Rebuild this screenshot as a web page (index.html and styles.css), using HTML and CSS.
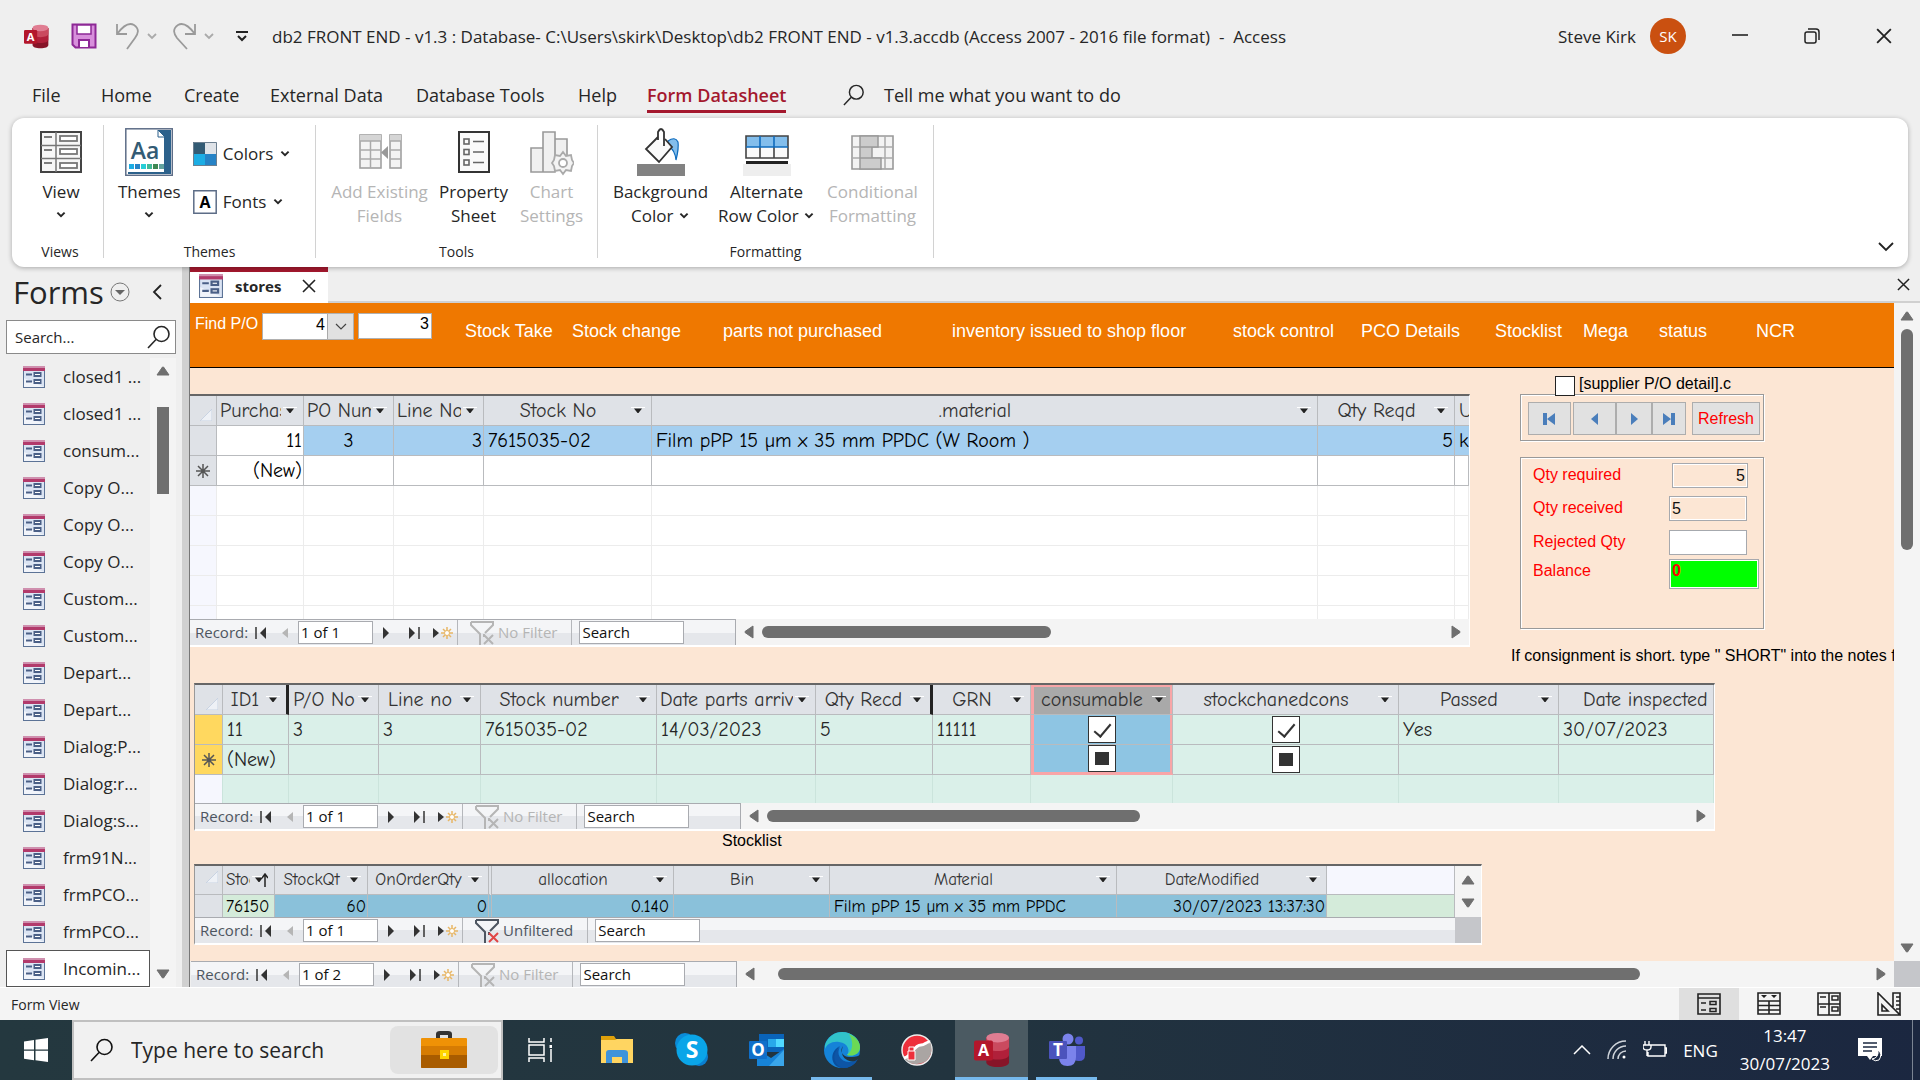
FILE: index.html
```html
<!DOCTYPE html>
<html lang="en">
<head>
  <meta charset="UTF-8">
  <title>db2 FRONT END - v1.3 - Access</title>
  <link rel="stylesheet" href="styles.css">
</head>
<body>
  <!-- shared icons -->
  <svg class="sprite" width="0" height="0">
    <symbol id="i-form" viewBox="0 0 22 22">
      <rect x="0.5" y="0.5" width="21" height="21" fill="#dbe4f3" stroke="#5c7396"/>
      <path d="M1 12L21 21H1z" fill="#fff" opacity=".6"/>
      <rect width="22" height="5" fill="#b23a6b"/>
      <rect width="22" height="2" fill="#cf8fae"/>
      <path d="M3 8.500h6M3 15.500h6" stroke="#4a5f86" stroke-width="2"/>
      <rect x="11.500" y="7" width="6" height="3" fill="#fff" stroke="#4a5f86" stroke-width="2"/>
      <rect x="11.500" y="14" width="6" height="3" fill="#fff" stroke="#4a5f86" stroke-width="2"/>
    </symbol>
    <symbol id="i-chev" viewBox="0 0 10 10"><path d="M2 3l3 3 3-3" fill="none" stroke="currentColor" stroke-width="1.600"/></symbol>
    <symbol id="i-x" viewBox="0 0 14 14"><path d="M1 1l12 12M13 1L1 13" fill="none" stroke="#222" stroke-width="1.600"/></symbol>
    <symbol id="i-search" viewBox="0 0 24 24"><circle cx="14.500" cy="9" r="7.500" fill="none" stroke="currentColor" stroke-width="1.600"/><path d="M9 14.500L1 23" stroke="currentColor" stroke-width="1.600"/></symbol>
    <symbol id="i-drop" viewBox="0 0 14 8"><path d="M0 .5h14" stroke="#fff"/><path d="M3 1.500h8L7.500 6h-1z" fill="#222"/></symbol>
    <symbol id="i-left" viewBox="0 0 10 14"><path d="M9 1v12L1 7.500v-1z" fill="#6f6f6f" stroke="#6f6f6f" stroke-linejoin="round"/></symbol>
    <symbol id="i-right" viewBox="0 0 10 14"><path d="M1 1v12L9 7.500v-1z" fill="#6f6f6f" stroke="#6f6f6f" stroke-linejoin="round"/></symbol>
    <symbol id="i-up" viewBox="0 0 14 10"><path d="M1 9h12L7.500 1h-1z" fill="#6f6f6f" stroke="#6f6f6f" stroke-linejoin="round"/></symbol>
    <symbol id="i-down" viewBox="0 0 14 10"><path d="M1 1h12L7.500 9h-1z" fill="#6f6f6f" stroke="#6f6f6f" stroke-linejoin="round"/></symbol>
    <symbol id="i-first" viewBox="0 0 12 12"><path d="M1 0v12" stroke="currentColor" stroke-width="1.500"/><path d="M11 0v12L5 6z" fill="currentColor"/></symbol>
    <symbol id="i-last" viewBox="0 0 12 12"><path d="M11 0v12" stroke="currentColor" stroke-width="1.500"/><path d="M1 0v12l6-6z" fill="currentColor"/></symbol>
    <symbol id="i-prev" viewBox="0 0 12 12"><path d="M9 1v10L3 6z" fill="currentColor"/></symbol>
    <symbol id="i-next" viewBox="0 0 12 12"><path d="M3 0v12l6-6z" fill="currentColor"/></symbol>
    <symbol id="i-new" viewBox="0 0 20 12"><path d="M0 1v10l6-5z" fill="#333"/><path d="M14 0v12M8 6h12M10 2l8 8M18 2l-8 8" stroke="#e8b766" stroke-width="1.500"/><circle cx="14" cy="6" r="2.500" fill="#fff" stroke="#e8b766"/></symbol>
    <symbol id="i-filter" viewBox="0 0 24 24"><path d="M1 1h22v3l-8 8M1 1v3l9 9v11M14 13v3" fill="none" stroke="currentColor" stroke-width="2"/><path d="M14 14l9 9M23 14l-9 9" stroke-width="2"/></symbol>
    <symbol id="i-star" viewBox="0 0 14 14"><path d="M7 0v14M0 7h14M2 2l10 10M12 2L2 12" stroke="#555" stroke-width="1.500"/></symbol>
    <symbol id="i-corner" viewBox="0 0 12 12"><path d="M12 0v12H0z" fill="#eef1f6" stroke="#c9d3e2"/></symbol>
    <symbol id="i-access" viewBox="0 0 38 38">
      <path d="M13 6v26c0 3 5 5 12 5s12-2 12-5V6z" fill="#871428"/>
      <path d="M13 6v18c0 3 5 5 12 5s12-2 12-5V6z" fill="#b0203a"/>
      <path d="M13 6v9c0 3 5 5 12 5s12-2 12-5V6z" fill="#ca4a5f"/>
      <ellipse cx="25" cy="6" rx="12" ry="5" fill="#e07d92"/>
      <rect x="0" y="9" width="20" height="21" rx="2" fill="#b3162b"/>
      <text x="10" y="25.500" text-anchor="middle" class="logo-letter">A</text>
    </symbol>
  </svg>

  <header class="titlebar">
    <svg class="app-logo" width="25" height="25"><use href="#i-access"/></svg>
    <button class="icon-btn" aria-label="Save"><svg width="26" height="26" viewBox="0 0 26 26"><path d="M1.500 1.500h23v23h-20l-3-3z" fill="#d78fdb" stroke="#8d2896" stroke-width="2"/><rect x="6" y="2" width="14" height="9" fill="#fff" stroke="#8d2896" stroke-width="1.500"/><rect x="7" y="16" width="12" height="9" fill="#8d2896"/><rect x="9" y="18" width="8" height="6" fill="#fff"/></svg></button>
    <button class="icon-btn undo" aria-label="Undo"><svg width="42" height="28" viewBox="0 0 42 28"><path d="M2 2v10h10M2 12C8 4 14 0 19 3c6 4 4 9 1 13l-8 11" fill="none" stroke="#9a9a9a" stroke-width="1.800"/><path d="M33 12l4 4 4-4" fill="none" stroke="#aaa" stroke-width="1.800"/></svg></button>
    <button class="icon-btn redo" aria-label="Redo"><svg width="42" height="28" viewBox="0 0 42 28"><path d="M23 2v10H13M23 12C17 4 11 0 6 3c-6 4-4 9-1 13l10 11" fill="none" stroke="#9a9a9a" stroke-width="1.800"/><path d="M33 12l4 4 4-4" fill="none" stroke="#aaa" stroke-width="1.800"/></svg></button>
    <button class="icon-btn" aria-label="Customize"><svg width="12" height="12" viewBox="0 0 12 12"><path d="M0 2h12M2 6l4 4 4-4" fill="none" stroke="#222" stroke-width="2"/></svg></button>
    <div class="title">db2 FRONT END - v1.3 : Database- C:\Users\skirk\Desktop\db2 FRONT END - v1.3.accdb (Access 2007 - 2016 file format)&nbsp; -&nbsp; Access</div>
    <span class="user">Steve Kirk</span>
    <span class="avatar">SK</span>
    <button class="win-btn" aria-label="Minimize"><svg width="16" height="16" viewBox="0 0 16 16"><path d="M0 7h16" stroke="#222" stroke-width="1.600"/></svg></button>
    <button class="win-btn" aria-label="Restore"><svg width="16" height="16" viewBox="0 0 16 16"><rect x="1" y="4" width="11" height="11" rx="2" fill="none" stroke="#222" stroke-width="1.500"/><path d="M4 1h8q3 0 3 3v8" fill="none" stroke="#222" stroke-width="1.500"/></svg></button>
    <button class="win-btn" aria-label="Close"><svg width="16" height="16"><use href="#i-x"/></svg></button>
  </header>

  <nav class="menu">
    <a href="#" class="m-file">File</a>
    <a href="#" class="m-home">Home</a>
    <a href="#" class="m-create">Create</a>
    <a href="#" class="m-ext">External Data</a>
    <a href="#" class="m-db">Database Tools</a>
    <a href="#" class="m-help">Help</a>
    <a href="#" class="m-form active"><span>Form Datasheet</span></a>
    <svg class="m-search" width="22" height="22"><use href="#i-search"/></svg>
    <a href="#">Tell me what you want to do</a>
  </nav>

  <section class="ribbon">
    <div class="group g-views">
      <div class="tools">
        <button class="tool single">
          <svg width="42" height="42" viewBox="0 0 42 42"><rect x="1" y="1" width="40" height="40" fill="#f7f7f7" stroke="#444" stroke-width="2"/><path d="M1 14.500h40M1 27.500h40M16 1v40" stroke="#777" stroke-width="1.500"/><path d="M4 6h8M4 19h8M4 32h8" stroke="#555" stroke-width="1.600"/><g fill="#fff" stroke="#777" stroke-width="1.800"><rect x="20" y="5" width="17" height="5"/><rect x="20" y="18" width="17" height="5"/><rect x="20" y="32" width="17" height="5"/></g></svg>
          <span>View</span><svg width="12" height="12"><use href="#i-chev"/></svg>
        </button>
      </div>
      <div class="caption">Views</div>
    </div>
    <div class="group g-themes">
      <div class="tools">
        <button class="tool single">
          <svg width="48" height="48" viewBox="0 0 48 48"><rect x=".8" y=".8" width="46.500" height="46.500" fill="#fff" stroke="#5d6d87" stroke-width="1.500"/><path d="M33 2h13v44H3v-2h36V9h-6z" fill="#2c618b"/><path d="M33 2l7 7h-7z" fill="#fff" stroke="#2c618b"/><text x="20" y="31" text-anchor="middle" class="aa">Aa</text><rect x="4" y="36" width="5" height="5" fill="#1cade4"/><rect x="10" y="36" width="5" height="5" fill="#2683c6"/><rect x="16" y="36" width="5" height="5" fill="#27ced7"/><rect x="22" y="36" width="5" height="5" fill="#42ba97"/><rect x="28" y="36" width="5" height="5" fill="#3e8853"/><rect x="34" y="36" width="5" height="5" fill="#62a39f"/></svg>
          <span>Themes</span><svg width="12" height="12"><use href="#i-chev"/></svg>
        </button>
        <div class="mini-tools">
          <button><svg width="24" height="24" viewBox="0 0 24 24"><path fill="#335b74" d="M0 0h12v12H0z"/><path fill="#dfe3e8" d="M12 0h12v12H12z"/><path fill="#1cade4" d="M0 12h12v12H0z"/><path fill="#2683c6" d="M12 12h12v12H12z"/><path d="M.5.500h23v23H.5z" fill="none" stroke="#6c7f90"/></svg>Colors<svg width="12" height="12"><use href="#i-chev"/></svg></button>
          <button><svg width="24" height="24" viewBox="0 0 24 24"><path d="M.8.800h22.400v22.400H.8z" fill="#fff" stroke="#5d6d87" stroke-width="1.500"/><text x="12" y="18" text-anchor="middle" class="font-a">A</text></svg>Fonts<svg width="12" height="12"><use href="#i-chev"/></svg></button>
        </div>
      </div>
      <div class="caption">Themes</div>
    </div>
    <div class="group g-tools">
      <div class="tools">
        <button class="tool w-add" disabled>
          <svg width="44" height="44" viewBox="0 0 44 44"><g fill="#f3f3f3" stroke="#a0a0a0" stroke-width="1.600"><rect x="2" y="5" width="21" height="33"/><rect x="32" y="5" width="11" height="33"/></g><path d="M2 5h21v6H2zM32 5h11v6H32z" fill="#d5d5d5"/><path d="M2 11h21M2 20h21M2 29h21M12.500 11v27M32 11h11M32 20h11M32 29h11" stroke="#aaa" stroke-width="1.500"/><path d="M30 16v13l-7-6.500z" fill="#999"/></svg>
          <span>Add Existing<br>Fields</span>
        </button>
        <button class="tool w-prop">
          <svg width="32" height="44" viewBox="0 0 32 44"><rect x="1" y="2" width="30" height="40" fill="#fafafa" stroke="#333" stroke-width="2"/><g fill="none" stroke="#666" stroke-width="1.600"><rect x="6" y="9" width="5" height="5"/><rect x="6" y="19.500" width="5" height="5"/><rect x="6" y="30" width="5" height="5"/><path d="M15 11.500h11M15 22h11M15 32.500h11"/></g></svg>
          <span>Property<br>Sheet</span>
        </button>
        <button class="tool w-chart" disabled>
          <svg width="44" height="44" viewBox="0 0 44 44"><g fill="#f0f0f0" stroke="#999" stroke-width="1.600"><path d="M1 18h12v24H1zM13 2h12v40H13zM25 9h12v20H25z"/></g><path d="M33 22l3 4 5-1 1 5 2 3-2 3-1 5-5-1-3 4-3-4-5 1-1-5-2-3 2-3 1-5 5 1z" fill="#f3f3f3" stroke="#aaa" stroke-width="1.800"/><circle cx="33" cy="33" r="4" fill="#fff" stroke="#aaa" stroke-width="1.800"/></svg>
          <span>Chart<br>Settings</span>
        </button>
      </div>
      <div class="caption">Tools</div>
    </div>
    <div class="group g-format">
      <div class="tools">
        <button class="tool w-bg">
          <svg width="48" height="48" viewBox="0 0 48 48"><path d="M0 36h48v12H0z" fill="#828282"/><path d="M31 13q7-5 10 1 1 6-2 18-1-10-7-13z" fill="#83beec" stroke="#0f6cbd" stroke-width="1.200"/><path d="M21 9L9 21l13 13 13-15-7-8" fill="#fafafa" stroke="#333" stroke-width="1.800"/><path d="M21 12V4q3-6 6 0v14" fill="#fff" stroke="#333" stroke-width="1.800"/></svg>
          <span>Background<br>Color <svg width="12" height="12"><use href="#i-chev"/></svg></span>
        </button>
        <button class="tool w-alt">
          <svg width="48" height="48" viewBox="0 0 48 48"><path d="M0 36h48v12H0z" fill="#eee"/><path d="M3 8h42v11H3z" fill="#83beec"/><path d="M3 19h42v11H3z" fill="#fafafa"/><path d="M17 19v11M31 19v11M3 8h42v22H3z" fill="none" stroke="#444" stroke-width="1.600"/><path d="M3 19h42M17 8v11M31 8v11" stroke="#0f6cbd" stroke-width="1.600"/><path d="M3 34.500h42" stroke="#222" stroke-width="3"/></svg>
          <span>Alternate<br>Row Color <svg width="12" height="12"><use href="#i-chev"/></svg></span>
        </button>
        <button class="tool w-cond" disabled>
          <svg width="44" height="48" viewBox="0 0 44 48"><path d="M1 8h41v33H1z" fill="#f3f3f3" stroke="#999" stroke-width="1.600"/><path d="M1 19h41M1 30h41M34 8v33" stroke="#aaa" stroke-width="1.500"/><path d="M9 8h18v11H9zM9 19h12v11H9zM9 30h21v11H9z" fill="#ccc" stroke="#999" stroke-width="1.500"/></svg>
          <span>Conditional<br>Formatting</span>
        </button>
      </div>
      <div class="caption">Formatting</div>
    </div>
    <button class="collapse" aria-label="Collapse ribbon"><svg width="16" height="10" viewBox="0 0 16 10"><path d="M1 1l7 7 7-7" fill="none" stroke="#222" stroke-width="1.800"/></svg></button>
  </section>

  <main class="workspace">
    <aside class="pane">
      <div class="pane-head">
        <h1>Forms</h1>
        <button class="icon-btn" aria-label="Category"><svg width="20" height="20" viewBox="0 0 20 20"><circle cx="10" cy="10" r="9" fill="none" stroke="#777"/><path d="M5 8h10l-5 5z" fill="#666"/></svg></button>
        <button class="icon-btn shut" aria-label="Close pane"><svg width="10" height="16" viewBox="0 0 10 16"><path d="M9 1L2 8l7 7" fill="none" stroke="#222" stroke-width="1.800"/></svg></button>
      </div>
      <div class="pane-search">
        <input type="text" placeholder="Search..." aria-label="Search forms">
        <svg width="24" height="24"><use href="#i-search"/></svg>
      </div>
      <div class="pane-body">
        <ul class="forms">
          <li><a href="#"><svg><use href="#i-form"/></svg>closed1 ...</a></li>
          <li><a href="#"><svg><use href="#i-form"/></svg>closed1 ...</a></li>
          <li><a href="#"><svg><use href="#i-form"/></svg>consum...</a></li>
          <li><a href="#"><svg><use href="#i-form"/></svg>Copy O...</a></li>
          <li><a href="#"><svg><use href="#i-form"/></svg>Copy O...</a></li>
          <li><a href="#"><svg><use href="#i-form"/></svg>Copy O...</a></li>
          <li><a href="#"><svg><use href="#i-form"/></svg>Custom...</a></li>
          <li><a href="#"><svg><use href="#i-form"/></svg>Custom...</a></li>
          <li><a href="#"><svg><use href="#i-form"/></svg>Depart...</a></li>
          <li><a href="#"><svg><use href="#i-form"/></svg>Depart...</a></li>
          <li><a href="#"><svg><use href="#i-form"/></svg>Dialog:P...</a></li>
          <li><a href="#"><svg><use href="#i-form"/></svg>Dialog:r...</a></li>
          <li><a href="#"><svg><use href="#i-form"/></svg>Dialog:s...</a></li>
          <li><a href="#"><svg><use href="#i-form"/></svg>frm91N...</a></li>
          <li><a href="#"><svg><use href="#i-form"/></svg>frmPCO...</a></li>
          <li><a href="#"><svg><use href="#i-form"/></svg>frmPCO...</a></li>
          <li class="current"><a href="#"><svg><use href="#i-form"/></svg>Incomin...</a></li>
        </ul>
        <div class="vscroll list-scroll"><svg width="14" height="10"><use href="#i-up"/></svg><div class="track"><div class="thumb"></div></div><svg width="14" height="10"><use href="#i-down"/></svg></div>
      </div>
    </aside>

    <div class="document">
      <div class="doc-tabs">
        <div class="doc-tab"><svg width="24" height="24"><use href="#i-form"/></svg><span>stores</span><button class="icon-btn" aria-label="Close tab"><svg width="14" height="14"><use href="#i-x"/></svg></button></div>
        <button class="icon-btn doc-close" aria-label="Close"><svg width="13" height="13"><use href="#i-x"/></svg></button>
      </div>
      <div class="doc-view">
        <div class="form">
          <div class="form-head">
            <label for="po">Find P/O</label>
            <div class="combo"><input id="po" type="text" value="4"><button aria-label="Open list"><svg width="12" height="12" viewBox="0 0 12 12"><path d="M1 3l5 5 5-5" fill="none" stroke="#444" stroke-width="1.200"/></svg></button></div>
            <input class="po-line" type="text" value="3" aria-label="P/O line">
            <nav class="links">
              <a href="#">Stock Take</a><a href="#">Stock change</a><a href="#">parts not purchased</a><a href="#">inventory issued to shop floor</a><a href="#">stock control</a><a href="#">PCO Details</a><a href="#">Stocklist</a><a href="#">Mega</a><a href="#">status</a><a href="#">NCR</a>
            </nav>
          </div>

          <div class="form-body">
            <div class="top-row">
              <div class="subform purchases">
                <div class="sheet">
                  <table>
                    <colgroup><col style="width:27px"><col style="width:87px"><col style="width:90px"><col style="width:90px"><col style="width:168px"><col style="width:666px"><col style="width:137px"><col></colgroup>
                    <thead><tr>
                      <th class="sel"><svg width="12" height="12"><use href="#i-corner"/></svg></th>
                      <th><div><span>Purchase</span><svg><use href="#i-drop"/></svg></div></th>
                      <th><div><span>PO Number</span><svg><use href="#i-drop"/></svg></div></th>
                      <th><div><span>Line No</span><svg><use href="#i-drop"/></svg></div></th>
                      <th><div><span>Stock No</span><svg><use href="#i-drop"/></svg></div></th>
                      <th><div><span>.material</span><svg><use href="#i-drop"/></svg></div></th>
                      <th><div><span>Qty Reqd</span><svg><use href="#i-drop"/></svg></div></th>
                      <th class="edge">U</th>
                    </tr></thead>
                    <tbody>
                      <tr class="picked"><td class="sel"></td><td class="num key">11</td><td class="mid">3</td><td class="num">3</td><td>7615035-02</td><td>Film pPP 15 µm x 35 mm PPDC (W Room )</td><td class="num">5</td><td class="edge">k</td></tr>
                      <tr><td class="sel"><svg width="14" height="14"><use href="#i-star"/></svg></td><td class="num">(New)</td><td></td><td></td><td></td><td></td><td></td><td></td></tr>
                      <tr class="blank"><td class="sel"></td><td></td><td></td><td></td><td></td><td></td><td></td><td></td></tr>
                      <tr class="blank"><td class="sel"></td><td></td><td></td><td></td><td></td><td></td><td></td><td></td></tr>
                      <tr class="blank"><td class="sel"></td><td></td><td></td><td></td><td></td><td></td><td></td><td></td></tr>
                      <tr class="blank"><td class="sel"></td><td></td><td></td><td></td><td></td><td></td><td></td><td></td></tr>
                      <tr class="blank"><td class="sel"></td><td></td><td></td><td></td><td></td><td></td><td></td><td></td></tr>
                    </tbody>
                  </table>
                </div>
                <div class="recbar">
                  <div class="records">
                    <label for="r1">Record:</label>
                    <button class="b-first" aria-label="First"><svg><use href="#i-first"/></svg></button><button class="b-prev" aria-label="Previous" disabled><svg><use href="#i-prev"/></svg></button>
                    <input id="r1" type="text" value="1 of 1">
                    <button class="b-next" aria-label="Next"><svg><use href="#i-next"/></svg></button><button class="b-last" aria-label="Last"><svg><use href="#i-last"/></svg></button><button class="b-new" aria-label="New"><svg class="wide"><use href="#i-new"/></svg></button>
                    <button class="filter" disabled><svg width="24" height="24"><use href="#i-filter"/></svg>No Filter</button>
                    <input class="find" type="text" value="Search" aria-label="Search records">
                  </div>
                  <div class="hscroll"><svg width="10" height="14"><use href="#i-left"/></svg><div class="track"><div class="thumb" style="width:42.5%"></div></div><svg width="10" height="14"><use href="#i-right"/></svg></div>
                </div>
              </div>

              <div class="side">
                <div class="check-row"><input type="checkbox" id="sup"><label for="sup">[supplier P/O detail].c</label></div>
                <div class="frame nav-frame">
                  <button class="n1" aria-label="First record"><svg width="14" height="14"><path d="M0 1h4v12H0zM12 1v12L4 7z" fill="#4a7ebb"/></svg></button>
                  <button class="n2" aria-label="Previous record"><svg width="14" height="14"><path d="M10 1v12L3 7z" fill="#4a7ebb"/></svg></button>
                  <button class="n3" aria-label="Next record"><svg width="14" height="14"><path d="M4 1v12l7-6z" fill="#4a7ebb"/></svg></button>
                  <button class="n4" aria-label="Last record"><svg width="14" height="14"><path d="M9 1h4v12H9zM1 1v12l8-6z" fill="#4a7ebb"/></svg></button>
                  <button class="refresh">Refresh</button>
                </div>
                <div class="frame qty-frame">
                  <label for="q1">Qty required</label><input id="q1" class="q1" type="text" value="5">
                  <label for="q2">Qty received</label><input id="q2" class="q2" type="text" value="5">
                  <label for="q3">Rejected Qty</label><input id="q3" class="q3" type="text">
                  <label for="q4">Balance</label><input id="q4" class="q4" type="text" value="0">
                </div>
                <p class="note">If consignment is short. type " SHORT" into the notes field</p>
              </div>
            </div>

            <div class="subform received">
              <div class="sheet">
                <table>
                  <colgroup><col style="width:28px"><col style="width:66px"><col style="width:90px"><col style="width:102px"><col style="width:176px"><col style="width:159px"><col style="width:117px"><col style="width:98px"><col style="width:142px"><col style="width:226px"><col style="width:160px"><col></colgroup>
                  <thead><tr>
                    <th class="sel"><svg width="12" height="12"><use href="#i-corner"/></svg></th>
                    <th class="bar"><div><span>ID1</span><svg><use href="#i-drop"/></svg></div></th>
                    <th><div><span>P/O No</span><svg><use href="#i-drop"/></svg></div></th>
                    <th><div><span>Line no</span><svg><use href="#i-drop"/></svg></div></th>
                    <th><div><span>Stock number</span><svg><use href="#i-drop"/></svg></div></th>
                    <th><div><span>Date parts arrived</span><svg><use href="#i-drop"/></svg></div></th>
                    <th class="bar"><div><span>Qty Recd</span><svg><use href="#i-drop"/></svg></div></th>
                    <th><div><span>GRN</span><svg><use href="#i-drop"/></svg></div></th>
                    <th class="col-on"><div><span>consumable</span><svg><use href="#i-drop"/></svg></div></th>
                    <th><div><span>stockchanedcons</span><svg><use href="#i-drop"/></svg></div></th>
                    <th><div><span>Passed</span><svg><use href="#i-drop"/></svg></div></th>
                    <th class="cut">Date inspected</th>
                  </tr></thead>
                  <tbody>
                    <tr><td class="sel"></td><td>11</td><td>3</td><td>3</td><td>7615035-02</td><td>14/03/2023</td><td>5</td><td>11111</td><td class="col-on mid"><input type="checkbox" checked aria-label="consumable"></td><td class="mid"><input type="checkbox" checked aria-label="stockchanedcons"></td><td>Yes</td><td>30/07/2023</td></tr>
                    <tr><td class="sel"><svg width="14" height="14"><use href="#i-star"/></svg></td><td>(New)</td><td></td><td></td><td></td><td></td><td></td><td></td><td class="col-on last mid"><input type="checkbox" class="mixed" aria-label="consumable new"></td><td class="mid"><input type="checkbox" class="mixed" aria-label="stockchanedcons new"></td><td></td><td></td></tr>
                    <tr class="blank"><td class="sel"></td><td></td><td></td><td></td><td></td><td></td><td></td><td></td><td></td><td></td><td></td><td></td></tr>
                  </tbody>
                </table>
              </div>
              <div class="recbar">
                <div class="records">
                  <label for="r2">Record:</label>
                  <button class="b-first" aria-label="First"><svg><use href="#i-first"/></svg></button><button class="b-prev" aria-label="Previous" disabled><svg><use href="#i-prev"/></svg></button>
                  <input id="r2" type="text" value="1 of 1">
                  <button class="b-next" aria-label="Next"><svg><use href="#i-next"/></svg></button><button class="b-last" aria-label="Last"><svg><use href="#i-last"/></svg></button><button class="b-new" aria-label="New"><svg class="wide"><use href="#i-new"/></svg></button>
                  <button class="filter" disabled><svg width="24" height="24"><use href="#i-filter"/></svg>No Filter</button>
                  <input class="find" type="text" value="Search" aria-label="Search records">
                </div>
                <div class="hscroll"><svg width="10" height="14"><use href="#i-left"/></svg><div class="track"><div class="thumb" style="width:40.5%"></div></div><svg width="10" height="14"><use href="#i-right"/></svg></div>
              </div>
            </div>

            <div class="stock-title">Stocklist</div>

            <div class="subform stock">
              <div class="stock-top">
                <div class="sheet">
                  <table>
                    <colgroup><col style="width:28px"><col style="width:52px"><col style="width:93px"><col style="width:124px"><col style="width:182px"><col style="width:156px"><col style="width:287px"><col style="width:210px"><col></colgroup>
                    <thead><tr>
                      <th class="sel"><svg width="12" height="12"><use href="#i-corner"/></svg></th>
                      <th><div><span>Stock</span><svg><use href="#i-drop"/></svg><svg class="sort" viewBox="0 0 6 14"><path d="M3 14V1M0 5l3-4 3 4" fill="none" stroke="#222" stroke-width="1.500"/></svg></div></th>
                      <th><div><span>StockQt</span><svg><use href="#i-drop"/></svg></div></th>
                      <th class="double"><div><span>OnOrderQty</span><svg><use href="#i-drop"/></svg></div></th>
                      <th><div><span>allocation</span><svg><use href="#i-drop"/></svg></div></th>
                      <th><div><span>Bin</span><svg><use href="#i-drop"/></svg></div></th>
                      <th><div><span>Material</span><svg><use href="#i-drop"/></svg></div></th>
                      <th><div><span>DateModified</span><svg><use href="#i-drop"/></svg></div></th>
                      <th class="rest"></th>
                    </tr></thead>
                    <tbody>
                      <tr class="picked"><td class="sel"></td><td class="key">76150</td><td class="num">60</td><td class="num double">0</td><td class="num wide-end">0.140</td><td></td><td>Film pPP 15 µm x 35 mm PPDC</td><td class="num">30/07/2023 13:37:30</td><td class="rest"></td></tr>
                    </tbody>
                  </table>
                </div>
                <div class="vscroll stock-scroll"><svg width="14" height="10"><use href="#i-up"/></svg><svg width="14" height="10"><use href="#i-down"/></svg></div>
              </div>
              <div class="recbar">
                <div class="records grow">
                  <label for="r3">Record:</label>
                  <button class="b-first" aria-label="First"><svg><use href="#i-first"/></svg></button><button class="b-prev" aria-label="Previous" disabled><svg><use href="#i-prev"/></svg></button>
                  <input id="r3" type="text" value="1 of 1">
                  <button class="b-next" aria-label="Next"><svg><use href="#i-next"/></svg></button><button class="b-last" aria-label="Last"><svg><use href="#i-last"/></svg></button><button class="b-new" aria-label="New"><svg class="wide"><use href="#i-new"/></svg></button>
                  <button class="filter on"><svg width="24" height="24"><use href="#i-filter"/></svg>Unfiltered</button>
                  <input class="find" type="text" value="Search" aria-label="Search records">
                </div>
                <div class="grip"></div>
              </div>
            </div>
          </div>
        </div>
        <div class="vscroll page-scroll"><svg width="14" height="10"><use href="#i-up"/></svg><div class="track"><div class="thumb"></div></div><svg width="14" height="10"><use href="#i-down"/></svg></div>
      </div>
      <div class="recbar main-rec">
        <div class="records">
          <label for="r4">Record:</label>
          <button class="b-first" aria-label="First"><svg><use href="#i-first"/></svg></button><button class="b-prev" aria-label="Previous" disabled><svg><use href="#i-prev"/></svg></button>
          <input id="r4" type="text" value="1 of 2">
          <button class="b-next" aria-label="Next"><svg><use href="#i-next"/></svg></button><button class="b-last" aria-label="Last"><svg><use href="#i-last"/></svg></button><button class="b-new" aria-label="New"><svg class="wide"><use href="#i-new"/></svg></button>
          <button class="filter" disabled><svg width="24" height="24"><use href="#i-filter"/></svg>No Filter</button>
          <input class="find" type="text" value="Search" aria-label="Search records">
        </div>
        <div class="hscroll"><svg width="10" height="14"><use href="#i-left"/></svg><div class="track"><div class="thumb" style="margin-left:1.4%;width:78%"></div></div><svg width="10" height="14"><use href="#i-right"/></svg></div>
        <div class="grip"></div>
      </div>
    </div>
  </main>

  <footer class="status">
    <span>Form View</span>
    <button class="on" aria-label="Form View"><svg width="24" height="24" viewBox="0 0 24 24"><path d="M1 2h22v20H1zM1 6h22" fill="none" stroke="#222" stroke-width="1.600"/><path d="M4 11h5M4 18h5" stroke="#222" stroke-width="1.500"/><path d="M13 9.500h6v3h-6zM13 16.500h6v3h-6z" fill="none" stroke="#222" stroke-width="1.500"/></svg></button>
    <button aria-label="Datasheet View"><svg width="24" height="24" viewBox="0 0 24 24"><path d="M1 1h22v21H1zM1 9h22M1 13.500h22M1 18h22M12 9v13" fill="none" stroke="#222" stroke-width="1.600"/><path d="M4 3h6l-3 3zM14 3h6l-3 3z" fill="#222"/></svg></button>
    <button aria-label="Layout View"><svg width="24" height="24" viewBox="0 0 24 24"><path d="M1 1h22v22H1zM1 12h22M12 1v22" fill="none" stroke="#222" stroke-width="1.600"/><path d="M3 5h6M3 15h6M15 4h6v4h-6zM15 15h6v4h-6z" fill="none" stroke="#222" stroke-width="1.500"/></svg></button>
    <button aria-label="Design View"><svg width="24" height="24" viewBox="0 0 24 24"><path d="M1 1v22h22zM5 13v6h6zM16 15V1h7v22M19 5h4M19 9h4M19 13h4M19 17h4" fill="none" stroke="#222" stroke-width="1.600"/></svg></button>
  </footer>

  <div class="taskbar">
    <button class="start" aria-label="Start"><svg width="24" height="24" viewBox="0 0 24 24" fill="#fff"><path d="M0 3.500L10 2v9.500H0zM11.500 1.800L24 0v11.500H11.500zM0 12.800h10v9.400L0 20.800zM11.500 12.800H24V24l-12.500-1.700z"/></svg></button>
    <div class="task-search">
      <svg width="24" height="24"><use href="#i-search"/></svg>
      <input type="text" placeholder="Type here to search" aria-label="Type here to search">
      <div class="pill"><svg width="46" height="38" viewBox="0 0 46 38"><path d="M17 8V3q0-1 2-1h8q2 0 2 1v5" fill="none" stroke="#333" stroke-width="4"/><rect y="7" width="46" height="30" rx="1" fill="#ef9206"/><path d="M0 24h46v12q0 1-1 1H1q-1 0-1-1z" fill="#a95c00"/><path d="M0 15h46v9H0z" fill="#d67c03"/><rect x="19" y="19" width="9" height="9" fill="#ffd400"/><rect x="22" y="22" width="3" height="3" fill="#fff3a0"/></svg></div>
    </div>
    <button class="app view-app" aria-label="Task View"><svg width="24" height="24" viewBox="0 0 24 24" fill="none" stroke="#fff" stroke-width="1.500"><path d="M1 0v4h15V0M1 24v-4h15v4M1 7h15v10H1zM23 0v4M23 11v13"/><path d="M21.500 7h3v3h-3z" fill="#fff" stroke="none"/></svg></button>
    <button class="app" aria-label="File Explorer"><svg width="34" height="28" viewBox="0 0 34 28"><path d="M1 0h13l2 3h17v24H1z" fill="#dfa10b"/><path d="M1 4h14l2-1h16v24H1z" fill="#ffd561"/><path d="M6 27V17q0-3 3-3h15q4 0 4 3v10h-6v-6H12v6z" fill="#3f93db"/></svg></button>
    <button class="app" aria-label="Skype"><svg width="34" height="34" viewBox="0 0 34 34"><circle cx="10" cy="10" r="10" fill="#0a8bd8"/><circle cx="24" cy="24" r="9" fill="#0a7fd0"/><circle cx="17" cy="17" r="15.500" fill="#0aa5e8"/><text x="17" y="25" text-anchor="middle" class="skype">S</text></svg></button>
    <button class="app" aria-label="Outlook"><svg width="36" height="34" viewBox="0 0 36 34"><path d="M10 1h25v18H10z" fill="#0a63b8"/><path d="M19 6h8v8h-8z" fill="#28a8ea"/><path d="M27 6h8v8h-8z" fill="#50d9ff"/><path d="M8 16l14 9 13-9v17H8z" fill="#1784d8"/><path d="M35 17v16H20z" fill="#3aa6ea"/><rect y="8" width="18" height="18" rx="1" fill="#0f6fca"/><text x="9" y="23" text-anchor="middle" class="logo-letter">O</text></svg></button>
    <button class="app run" aria-label="Edge"><svg width="36" height="36" viewBox="0 0 36 36"><circle cx="18" cy="18" r="18" fill="#1583d8"/><path d="M1 13C4 4 11 0 18 0c10 0 18 7 18 15 0 7-7 10-13 8 3-3 2-12-8-13C8 9 3 12 1 17z" fill="#31c2c9"/><path d="M25 2c7 3 11 8 11 13 0 7-7 10-13 8 6-4 7-13 2-21z" fill="#6bd955"/><path d="M16 14c-6 5-3 16 6 18 5 1 10-1 12-5-5 9-16 12-23 6-5-6-3-15 5-19z" fill="#0b4f9c"/><path d="M19 14c-4 5 0 11 6 11 4 0 7 0 11-2v6c-9 3-22-2-17-15z" fill="#22343f"/><path d="M16 15c-4 6 0 15 9 15 4 0 7-1 9-3-3 6-9 9-15 9-10-3-12-15-3-21z" fill="#0d55a6"/></svg></button>
    <button class="app" aria-label="Reader"><svg width="32" height="32" viewBox="0 0 32 32"><circle cx="16" cy="16" r="15" fill="#ee2f3b" stroke="#eee" stroke-width="1.500"/><path d="M3 24c8 0 8-13 17-13 4 0 6-4 9-3 4 9 0 22-13 22-6 0-10-2-13-6z" fill="#aaa5a3"/><path d="M3 24c8-1 9-13 17-13 4 0 6-4 9-3" fill="none" stroke="#fff" stroke-width="3"/><path d="M7 17h7v9H7zM8 17v-4h5v4" fill="#ee2f3b" stroke="#fff"/></svg></button>
    <button class="app run active" aria-label="Access"><svg width="36" height="36"><use href="#i-access"/></svg></button>
    <button class="app run" aria-label="Teams"><svg width="36" height="34" viewBox="0 0 36 34"><circle cx="19" cy="6" r="5.500" fill="#7b83eb"/><circle cx="30" cy="7.500" r="4" fill="#5059c9"/><path d="M24 13h12v9q0 6-6 6t-6-6z" fill="#5059c9"/><path d="M10 13h17v11q0 9-8.500 9T10 24z" fill="#7b83eb"/><rect y="8" width="18" height="18" rx="1" fill="#4b53bc"/><text x="9" y="23" text-anchor="middle" class="logo-letter">T</text></svg></button>
    <div class="tray">
      <svg width="18" height="10" viewBox="0 0 18 10"><path d="M1 9l8-8 8 8" fill="none" stroke="#fff" stroke-width="1.500"/></svg>
      <svg width="20" height="20" viewBox="0 0 20 20" fill="none" stroke="#cfd4da" stroke-width="1.500"><path d="M1 19A18 18 0 0 1 19 1M6 19A13 13 0 0 1 19 6M11 19a8 8 0 0 1 8-8"/><circle cx="17" cy="17" r="1.500" fill="#fff" stroke="none"/></svg>
      <svg width="24" height="18" viewBox="0 0 24 18" fill="none" stroke="#fff" stroke-width="1.400"><path d="M8 4h14v11H5v-4M22 7h1.500v5H22M2 0v4M6 0v4M0 4h8v2q0 3-4 3t-4-3zM4 9v6"/></svg>
      <span>ENG</span>
      <div class="clock"><div>13:47</div><div>30/07/2023</div></div>
      <svg width="26" height="26" viewBox="0 0 26 26"><path d="M0 1h24v18H15l-3 4-3-4H0z" fill="#fff"/><path d="M5 6h14M5 10h14M5 14h9" stroke="#1b2840" stroke-width="1.500"/><path d="M20 13q5 4 1 10-4 2-7-1 7-1 6-9z" fill="#1b2840" stroke="#fff"/></svg>
    </div>
  </div>
</body>
</html>
```

FILE: styles.css
```css
* {
  box-sizing: border-box;
}
body {
  margin: 0;
  min-height: 100vh;
  display: flex;
  flex-direction: column;
  background: #efefef;
  color: #262626;
  font-family: "Segoe UI", "Open Sans", "Noto Sans", sans-serif;
  font-size: 17px;
  overflow: hidden;
}
button, input {
  font: inherit;
  color: inherit;
}
button {
  border: none;
  background: none;
  padding: 0;
  display: flex;
  align-items: center;
  justify-content: center;
}
input {
  border-radius: 0;
  outline: none;
  min-width: 0;
}
a {
  color: inherit;
  text-decoration: none;
}
svg {
  flex: none;
}
.sprite {
  position: absolute;
}
.logo-letter {
  font: bold 17px "Open Sans", sans-serif;
  fill: #fff;
}
.skype {
  font: bold 23px "Open Sans", sans-serif;
  fill: #fff;
}
.aa {
  font: 600 23px "Open Sans", sans-serif;
  fill: #335b74;
}
.font-a {
  font: bold 16px "Open Sans", sans-serif;
}

/* title bar */
.titlebar {
  height: 72px;
  display: flex;
  align-items: center;
  padding-left: 24px;
}
.app-logo {
  margin-right: 22px;
}
.undo {
  margin-left: 18px;
}
.redo {
  margin: 0 22px 0 15px;
}
.title {
  flex: 1;
  margin-left: 24px;
  white-space: pre;
}
.avatar {
  width: 36px;
  height: 36px;
  line-height: 36px;
  margin: 0 24px 0 14px;
  border-radius: 50%;
  background: #ca5010;
  color: #fff;
  font-size: 15px;
  text-align: center;
}
.win-btn {
  width: 60px;
  height: 40px;
  margin-right: 12px;
}
.win-btn:last-child {
  margin-right: 6px;
}

/* menu tabs */
.menu {
  height: 46px;
  display: flex;
  align-items: flex-start;
  padding: 8px 0 0 32px;
  font-size: 18px;
  line-height: 30px;
}
.m-file { width: 69px; }
.m-home { width: 83px; }
.m-create { width: 86px; }
.m-ext { width: 146px; }
.m-db { width: 162px; }
.m-help { width: 69px; }
.m-form { width: 196px; }
.menu .active {
  color: #a4182e;
  font-weight: 600;
}
.active span {
  display: inline-block;
  border-bottom: 3px solid #a4182e;
}
.m-search {
  margin: 4px 19px 0 0;
}

/* ribbon */
.ribbon {
  display: flex;
  height: 149px;
  margin: 0 12px;
  padding: 7px 0 9px;
  border-radius: 12px;
  background: #fff;
  box-shadow: 0 1px 5px rgba(0,0,0,0.3);
  position: relative;
  z-index: 1;
}
.group {
  display: flex;
  flex-direction: column;
  border-right: 1px solid #d2d2d2;
}
.g-views {
  width: 92px;
  padding-left: 5px;
}
.g-themes { width: 212px; }
.g-tools { width: 282px; }
.g-format { width: 336px; }
.tools {
  flex: 1;
  display: flex;
  justify-content: center;
  padding-left: 2px;
}
.g-themes .tools {
  justify-content: flex-start;
  padding-left: 14px;
}
.caption {
  text-align: center;
  font-size: 14px;
  line-height: 12px;
}
.tool {
  flex-direction: column;
  justify-content: flex-start;
  padding-top: 3px;
  line-height: 24px;
  white-space: nowrap;
}
.tool > span {
  margin-top: 4px;
}
.tool > svg:first-child {
  height: 48px;
}
.tool:disabled {
  color: #b5b5b5;
}
.single > svg:last-child {
  margin-top: 5px;
}
.w-add { width: 110px; }
.w-prop { width: 78px; }
.w-chart { width: 78px; }
.w-bg { width: 104px; }
.w-alt { width: 108px; }
.w-cond { width: 104px; }
.mini-tools {
  display: flex;
  flex-direction: column;
  gap: 24px;
  padding: 17px 0 0 12px;
}
.mini-tools button {
  justify-content: flex-start;
  gap: 6px;
  line-height: 24px;
}
.collapse {
  margin: auto 14px 6px auto;
}

/* workspace */
.workspace {
  flex: 1;
  display: flex;
  min-height: 0;
}
.pane {
  width: 189px;
  flex: none;
  display: flex;
  flex-direction: column;
  border-right: 7px solid #d0d0d0;
}
.pane-head {
  height: 53px;
  display: flex;
  align-items: center;
  padding: 0 0 4px 13px;
}
.pane-head h1 {
  margin: 0 6px 0 0;
  font-size: 31px;
  font-weight: 400;
}
.shut {
  margin-left: 22px;
}
.pane-search {
  height: 34px;
  margin: 0 6px 4px;
  padding: 0 4px 0 8px;
  display: flex;
  align-items: center;
  background: #fff;
  border: 1px solid #8a8a8a;
}
.pane-search input {
  flex: 1;
  border: none;
  padding: 0;
  font-size: 15px;
}
.pane-search input::placeholder,
.task-search input::placeholder {
  color: #262626;
  opacity: 1;
}
.pane-body {
  flex: 1;
  display: flex;
  margin: 0 6px;
}
.forms {
  flex: 1;
  margin: 0;
  padding: 0;
  list-style: none;
}
.forms a {
  display: flex;
  align-items: center;
  height: 37px;
  padding-left: 17px;
  gap: 18px;
  white-space: nowrap;
}
.forms svg {
  width: 22px;
  height: 22px;
}
.current a {
  background: #fff;
  border: 1px solid #555;
  padding-left: 16px;
}

/* scroll bars */
.vscroll {
  width: 26px;
  flex: none;
  display: flex;
  flex-direction: column;
  align-items: center;
  padding: 8px 0;
  background: #f4f4f4;
}
.track {
  flex: 1;
}
.thumb {
  background: #6f6f6f;
}
.vscroll .thumb {
  width: 12px;
  border-radius: 6px;
}
.vscroll.list-scroll .thumb {
  height: 87px;
  border-radius: 0;
}
.list-scroll .track {
  padding-top: 31px;
}
.page-scroll .track {
  padding-top: 8px;
}
.page-scroll .thumb {
  height: 221px;
}
.hscroll {
  flex: 1;
  display: flex;
  align-items: center;
  gap: 8px;
  padding: 0 8px;
  background: #f4f4f4;
  border-left: 1px solid #a9abb0;
}
.hscroll .thumb {
  height: 12px;
  border-radius: 6px;
}

/* document */
.document {
  flex: 1;
  min-width: 0;
  display: flex;
  flex-direction: column;
  border-left: 1px solid #777;
}
.doc-tabs {
  height: 36px;
  display: flex;
  align-items: center;
  justify-content: space-between;
  border-bottom: 2px solid #d0d0d0;
}
.doc-tab {
  height: 36px;
  width: 138px;
  margin-bottom: -2px;
  padding: 0 12px 4px 9px;
  display: flex;
  align-items: center;
  gap: 12px;
  background: #fff;
  border-top: 5px solid #a4182e;
  font-size: 15px;
  font-weight: 700;
}
.doc-tab button {
  margin-left: auto;
}
.doc-close {
  margin-right: 10px;
}
.doc-view {
  flex: 1;
  display: flex;
  min-height: 0;
}
.form {
  flex: 1;
  min-width: 0;
  background: #fce6d4;
  overflow: hidden;
  font-family: "Liberation Sans", Arial, sans-serif;
  font-size: 16px;
  color: #000;
}
.form-head {
  height: 65px;
  display: flex;
  align-items: flex-start;
  padding: 10px 0 0 5px;
  background: #ef7800;
  border-bottom: 1px solid #000;
  color: #fff;
}
.form-head label {
  width: 67px;
  padding-top: 2px;
}
.combo {
  display: flex;
  width: 92px;
  height: 27px;
  margin-right: 4px;
  background: #fff;
  border: 1px solid #b0b0b0;
}
.combo input {
  flex: 1;
  border: none;
  padding: 0 2px 4px;
  text-align: right;
  color: #000;
}
.combo button {
  width: 26px;
  background: #e1e1e1;
  border-left: 1px solid #aaa;
}
.po-line {
  width: 74px;
  height: 26px;
  border: 1px solid #b0b0b0;
  padding: 0 2px 4px;
  text-align: right;
  color: #000;
}
.links {
  flex: 1;
  display: grid;
  grid-template-columns: 107px 151px 229px 281px 128px 134px 88px 76px 97px 1fr;
  margin-left: 33px;
  padding-top: 7px;
  font-size: 18px;
  line-height: 22px;
  white-space: nowrap;
}

/* datasheets */
.form-body {
  padding-top: 8px;
}
.top-row {
  display: flex;
  align-items: flex-start;
  gap: 41px;
}
.subform {
  border: 1px solid #999;
  border-top: 2px solid #666;
  border-right-color: #fff;
  border-bottom: 2px solid #fff;
}
.purchases {
  flex: 1;
  min-width: 0;
  margin-top: 18px;
  border-left: none;
}
.purchases .sheet {
  height: 223px;
}
.received {
  margin: 17px 179px 0 4px;
}
.received .sheet {
  height: 118px;
}
.stock {
  margin: 0 412px 0 4px;
}
.stock-title {
  padding-left: 532px;
  height: 33px;
  line-height: 20px;
}
.sheet {
  background: #fff;
  overflow: hidden;
}
table {
  width: 100%;
  table-layout: fixed;
  border-collapse: separate;
  border-spacing: 0;
  font-family: "Comic Sans MS", "Comic Neue", "Open Sans", sans-serif;
  font-size: 20px;
}
th, td {
  height: 30px;
  padding: 0 4px;
  border-right: 1px solid #b9bbbe;
  border-bottom: 1px solid #b9bbbe;
  line-height: 29px;
  text-align: left;
  font-weight: 400;
  white-space: nowrap;
  overflow: hidden;
}
th {
  background: #dfe2e7;
  padding: 0 6px 0 3px;
  color: #333;
}
th div {
  display: flex;
  align-items: center;
  gap: 2px;
}
th span {
  flex: 1;
  overflow: hidden;
  text-align: center;
}
th svg {
  width: 14px;
  height: 8px;
}
.sel {
  background: #dfe2e7;
  padding: 0 4px;
  text-align: center;
  line-height: 0;
}
th.sel {
  text-align: right;
  vertical-align: bottom;
  padding-bottom: 4px;
}
th.sel svg {
  width: 12px;
  height: 12px;
}
.num {
  text-align: right;
  padding: 0 1px;
}
.mid {
  text-align: center;
}
.edge {
  padding: 0 0 0 4px;
  border-right: none;
}
.picked td {
  background: #a5cff0;
  color: #000;
}
.picked .sel {
  background: #dfe2e7;
}
.picked .key {
  background: #fff;
}
.blank td {
  border-color: #ececec;
}
.blank .sel {
  background: #f6f7fe;
}
.received td {
  background: #daf0e9;
  color: #262626;
}
.received .sel {
  background: #ffd85f;
}
.received th.sel {
  background: #dfe2e7;
}
.received .blank td {
  border-color: #cbe4dc;
}
.received .blank .sel {
  background: #f6f7fe;
}
.received th.bar {
  border-right: 3px solid #222;
}
.received .cut {
  padding: 0 0 0 24px;
}
.received .col-on {
  background: #8ec5e3;
  box-shadow: inset 3px 0 #f8a5a7, inset -2px 0 #f8a5a7;
}
.received th.col-on {
  background: #a9a9a9;
  box-shadow: inset 3px 0 #f8a5a7, inset -2px 0 #f8a5a7, inset 0 2px #f8a5a7;
}
.received .last {
  border-bottom: 3px solid #f8a5a7;
}
input[type="checkbox"] {
  appearance: none;
  margin: 0;
  background: #fff;
  border: 1px solid #333;
}
td input[type="checkbox"] {
  width: 28px;
  height: 27px;
  display: block;
  margin: auto;
}
td input:checked {
  position: relative;
}
td input:checked::after {
  content: "";
  position: absolute;
  left: 9px;
  top: 3px;
  width: 7px;
  height: 15px;
  border: solid #333;
  border-width: 0 2px 2px 0;
  transform: rotate(40deg);
}
td input.mixed {
  padding: 6px;
  background: linear-gradient(#333, #333) content-box no-repeat, #fff;
}
.stock-top {
  display: flex;
}
.stock-top .sheet {
  flex: 1;
  min-width: 0;
  height: 51px;
}
.stock table {
  font-size: 17px;
}
.stock th, .stock td {
  height: 25px;
  line-height: 24px;
}
.stock .picked td {
  background: #8ac1da;
}
.stock .picked .sel {
  background: #dfe2e7;
}
.stock .picked .key, .stock .picked .rest {
  background: #d4ebda;
}
.stock .key {
  padding: 0 0 0 3px;
}
.stock th.rest {
  background: #f6f7fe;
}
.stock .double {
  border-right: 4px double #b9bbbe;
}
.stock .wide-end {
  padding-right: 4px;
}
.stock .sort {
  width: 6px;
  height: 14px;
  margin-left: -6px;
}
.stock-scroll {
  justify-content: space-between;
  padding: 9px 0;
}

/* record navigation */
.recbar {
  display: flex;
  height: 26px;
  font-family: "Segoe UI", "Open Sans", sans-serif;
}
.records {
  width: 545px;
  display: flex;
  align-items: stretch;
  padding-left: 5px;
  background: linear-gradient(#f4f5f7 50%, #e5e7eb 50%);
  border-top: 1px solid #a9abb0;
  font-size: 15px;
  line-height: 25px;
  color: #4d5560;
}
.grow {
  flex: 1;
}
.records label {
  width: 56px;
}
.records button {
  color: #333;
}
.records button:disabled {
  color: #b5b5b5;
}
.records button svg {
  width: 12px;
  height: 12px;
}
.records button .wide {
  width: 20px;
}
.b-first { width: 20px; }
.b-prev { width: 27px; }
.b-next { width: 26px; }
.b-last { width: 30px; }
.b-new { width: 28px; }
.records input {
  width: 75px;
  border: 1px solid #a9abb0;
  padding: 0 2px;
  background: #fff;
  color: #111;
  margin: 1px 0;
}
.records .filter {
  padding: 0 14px 0 12px;
  gap: 4px;
  border: solid #b5b7bb;
  border-width: 0 1px;
}
.records .filter svg {
  width: 24px;
  height: 24px;
  stroke: #b5b5b5;
}
.records .filter.on {
  color: #4d5560;
}
.records .filter.on svg {
  stroke: #e04545;
}
.records .find {
  width: 105px;
  margin-left: 7px;
}
.grip {
  width: 26px;
  background: #c5c6ca;
}
.main-rec {
  padding-left: 1px;
}

/* side panel */
.side {
  width: 383px;
  flex: none;
}
.check-row {
  display: flex;
  gap: 4px;
  padding-left: 44px;
  height: 18px;
  line-height: 16px;
}
.check-row input {
  width: 20px;
  height: 20px;
  border: 1px solid #222;
  flex: none;
  z-index: 1;
}
.frame {
  width: 244px;
  margin-left: 9px;
  border: 1px solid #999;
  box-shadow: inset 1px 1px #fff, 1px 1px #fff;
}
.nav-frame {
  display: flex;
  height: 47px;
  padding: 7px 0 0 7px;
}
.frame button {
  height: 33px;
  background: #e1e1e1;
  border: 1px solid #adadad;
}
.n1 { width: 43px; margin-right: 2px; }
.n2 { width: 43px; }
.n3 { width: 36px; }
.n4 { width: 34px; margin-right: 6px; }
.refresh {
  width: 68px;
  color: #f00;
}
.qty-frame {
  display: grid;
  grid-template-columns: 136px 1fr;
  grid-template-rows: 33px 34px 29px 32px;
  margin-top: 16px;
  height: 172px;
  padding: 5px 2px 0 12px;
  color: #f00;
}
.qty-frame label {
  line-height: 24px;
}
.qty-frame input {
  width: 78px;
  height: 25px;
  border: 1px solid #a6a9ae;
  box-shadow: inset 0 0 0 1px #fff;
  background: #fce6d4;
  padding: 0 2px;
  color: #111;
}
.qty-frame .q1 {
  width: 76px;
  margin-left: 3px;
  text-align: right;
}
.qty-frame .q3 {
  background: #fff;
}
.qty-frame .q4 {
  width: 90px;
  height: 30px;
  background: #0f0;
  color: #f00;
  font-weight: 700;
  padding-bottom: 6px;
}
.note {
  margin: 17px 0 0;
  line-height: 20px;
  white-space: nowrap;
  overflow: hidden;
}

/* status bar */
.status {
  height: 33px;
  display: flex;
  align-items: center;
  background: #f4f4f4;
  border-top: 1px solid #fff;
  padding: 0 1px 0 11px;
  font-size: 14px;
}
.status span {
  flex: 1;
}
.status button {
  width: 60px;
  height: 32px;
}
.status .on {
  background: #dfdfdf;
}

/* taskbar */
.taskbar {
  height: 60px;
  display: flex;
  background: linear-gradient(90deg, #24383f, #22343f 50%, #1b2740);
  color: #fff;
}
.start {
  width: 72px;
}
.task-search {
  width: 431px;
  display: flex;
  align-items: center;
  gap: 17px;
  padding: 0 3px 0 16px;
  background: #f1f1f1;
  border: 2px solid #c0c0c0;
  color: #111;
}
.task-search input {
  flex: 1;
  border: none;
  background: none;
  padding: 0;
  font-size: 21px;
}
.pill {
  width: 108px;
  height: 48px;
  display: flex;
  align-items: center;
  justify-content: center;
  border-radius: 8px;
  background: #e2e2e2;
}
.app {
  width: 73px;
  margin-right: 2px;
  border: solid transparent;
  border-width: 3px 0;
}
.view-app {
  margin-right: 4px;
}
.run {
  background: linear-gradient(#76b9ed, #76b9ed) center bottom / 61px 3px no-repeat border-box;
}
.app.active {
  background: #4b5a62;
  border-bottom-color: #76b9ed;
}
.tray {
  flex: 1;
  display: flex;
  align-items: center;
  justify-content: flex-end;
  gap: 16px;
  margin-right: 7px;
  padding-right: 28px;
  border-right: 1px solid #7b8493;
}
.clock {
  text-align: center;
  line-height: 28px;
  margin: 0 12px 0 6px;
}
```
